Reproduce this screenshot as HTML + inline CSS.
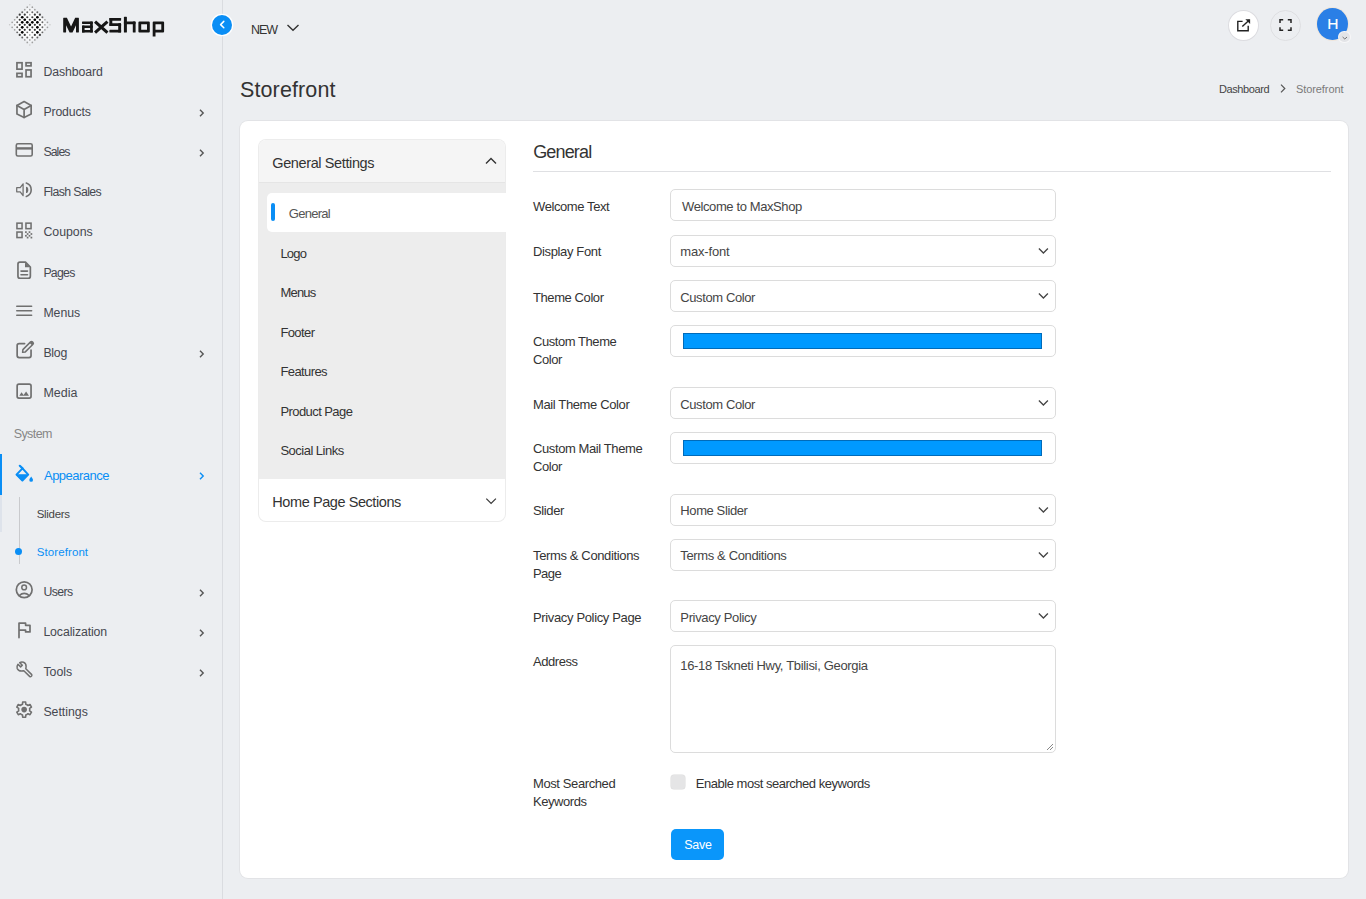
<!DOCTYPE html>
<html><head><meta charset="utf-8"><title>Storefront</title>
<style>
*{box-sizing:border-box;margin:0;padding:0}
html,body{width:1366px;height:899px;overflow:hidden;background:#eceef1;font-family:"Liberation Sans",sans-serif;color:#333}
body{position:relative}
.abs{position:absolute}
.t{position:absolute;white-space:nowrap}
svg{overflow:visible}
</style></head><body>
<div class="abs" style="left:222px;top:0;width:1px;height:899px;background:#dadce0"></div>
<svg class="abs" style="left:0;top:0" width="60" height="50" viewBox="0 0 60 50"><defs><radialGradient id="wg"><stop offset="0" stop-color="#fff"/><stop offset="0.55" stop-color="#fff"/><stop offset="1" stop-color="#fff" stop-opacity="0"/></radialGradient></defs><polygon points="29.8,5.8 48.8,24.8 29.8,43.8 10.8,24.8" fill="url(#wg)"/><circle cx="29.80" cy="4.64" r="0.75" fill="#c8c8c8"/><circle cx="27.28" cy="7.16" r="0.85" fill="#a0a0a0"/><circle cx="32.32" cy="7.16" r="0.85" fill="#a0a0a0"/><circle cx="24.76" cy="9.68" r="0.85" fill="#a0a0a0"/><circle cx="29.80" cy="9.68" r="0.85" fill="#a0a0a0"/><circle cx="34.84" cy="9.68" r="0.85" fill="#a0a0a0"/><circle cx="22.24" cy="12.20" r="0.98" fill="#666"/><circle cx="27.28" cy="12.20" r="0.98" fill="#666"/><circle cx="32.32" cy="12.20" r="0.98" fill="#666"/><circle cx="37.36" cy="12.20" r="0.98" fill="#666"/><circle cx="19.72" cy="14.72" r="1.10" fill="#3a3a3a"/><circle cx="24.76" cy="14.72" r="1.10" fill="#3a3a3a"/><circle cx="29.80" cy="14.72" r="0.85" fill="#a0a0a0"/><circle cx="34.84" cy="14.72" r="1.10" fill="#3a3a3a"/><circle cx="39.88" cy="14.72" r="1.10" fill="#3a3a3a"/><circle cx="17.20" cy="17.24" r="0.98" fill="#666"/><circle cx="22.24" cy="17.24" r="1.35" fill="#000"/><circle cx="27.28" cy="17.24" r="1.10" fill="#3a3a3a"/><circle cx="32.32" cy="17.24" r="1.10" fill="#3a3a3a"/><circle cx="37.36" cy="17.24" r="1.35" fill="#000"/><circle cx="42.40" cy="17.24" r="0.98" fill="#666"/><circle cx="14.68" cy="19.76" r="0.85" fill="#a0a0a0"/><circle cx="19.72" cy="19.76" r="1.10" fill="#3a3a3a"/><circle cx="24.76" cy="19.76" r="1.35" fill="#000"/><circle cx="29.80" cy="19.76" r="1.10" fill="#3a3a3a"/><circle cx="34.84" cy="19.76" r="1.35" fill="#000"/><circle cx="39.88" cy="19.76" r="1.10" fill="#3a3a3a"/><circle cx="44.92" cy="19.76" r="0.85" fill="#a0a0a0"/><circle cx="12.16" cy="22.28" r="0.85" fill="#a0a0a0"/><circle cx="17.20" cy="22.28" r="0.98" fill="#666"/><circle cx="22.24" cy="22.28" r="1.35" fill="#000"/><circle cx="27.28" cy="22.28" r="1.35" fill="#000"/><circle cx="32.32" cy="22.28" r="1.35" fill="#000"/><circle cx="37.36" cy="22.28" r="1.35" fill="#000"/><circle cx="42.40" cy="22.28" r="0.98" fill="#666"/><circle cx="47.44" cy="22.28" r="0.85" fill="#a0a0a0"/><circle cx="9.64" cy="24.80" r="0.75" fill="#c8c8c8"/><circle cx="14.68" cy="24.80" r="0.85" fill="#a0a0a0"/><circle cx="19.72" cy="24.80" r="1.10" fill="#3a3a3a"/><circle cx="24.76" cy="24.80" r="1.10" fill="#3a3a3a"/><circle cx="29.80" cy="24.80" r="1.35" fill="#000"/><circle cx="34.84" cy="24.80" r="1.10" fill="#3a3a3a"/><circle cx="39.88" cy="24.80" r="1.10" fill="#3a3a3a"/><circle cx="44.92" cy="24.80" r="0.85" fill="#a0a0a0"/><circle cx="49.96" cy="24.80" r="0.75" fill="#c8c8c8"/><circle cx="12.16" cy="27.32" r="0.85" fill="#a0a0a0"/><circle cx="17.20" cy="27.32" r="0.98" fill="#666"/><circle cx="22.24" cy="27.32" r="1.35" fill="#000"/><circle cx="27.28" cy="27.32" r="1.10" fill="#3a3a3a"/><circle cx="32.32" cy="27.32" r="1.10" fill="#3a3a3a"/><circle cx="37.36" cy="27.32" r="1.35" fill="#000"/><circle cx="42.40" cy="27.32" r="0.98" fill="#666"/><circle cx="47.44" cy="27.32" r="0.85" fill="#a0a0a0"/><circle cx="14.68" cy="29.84" r="0.85" fill="#a0a0a0"/><circle cx="19.72" cy="29.84" r="1.10" fill="#3a3a3a"/><circle cx="24.76" cy="29.84" r="1.10" fill="#3a3a3a"/><circle cx="29.80" cy="29.84" r="1.10" fill="#3a3a3a"/><circle cx="34.84" cy="29.84" r="1.10" fill="#3a3a3a"/><circle cx="39.88" cy="29.84" r="1.10" fill="#3a3a3a"/><circle cx="44.92" cy="29.84" r="0.85" fill="#a0a0a0"/><circle cx="17.20" cy="32.36" r="0.98" fill="#666"/><circle cx="22.24" cy="32.36" r="1.35" fill="#000"/><circle cx="27.28" cy="32.36" r="0.98" fill="#666"/><circle cx="32.32" cy="32.36" r="0.98" fill="#666"/><circle cx="37.36" cy="32.36" r="1.35" fill="#000"/><circle cx="42.40" cy="32.36" r="0.98" fill="#666"/><circle cx="19.72" cy="34.88" r="1.10" fill="#3a3a3a"/><circle cx="24.76" cy="34.88" r="1.10" fill="#3a3a3a"/><circle cx="29.80" cy="34.88" r="0.85" fill="#a0a0a0"/><circle cx="34.84" cy="34.88" r="1.10" fill="#3a3a3a"/><circle cx="39.88" cy="34.88" r="1.10" fill="#3a3a3a"/><circle cx="22.24" cy="37.40" r="0.98" fill="#666"/><circle cx="27.28" cy="37.40" r="0.98" fill="#666"/><circle cx="32.32" cy="37.40" r="0.98" fill="#666"/><circle cx="37.36" cy="37.40" r="0.98" fill="#666"/><circle cx="24.76" cy="39.92" r="0.85" fill="#a0a0a0"/><circle cx="29.80" cy="39.92" r="0.85" fill="#a0a0a0"/><circle cx="34.84" cy="39.92" r="0.85" fill="#a0a0a0"/><circle cx="27.28" cy="42.44" r="0.85" fill="#a0a0a0"/><circle cx="32.32" cy="42.44" r="0.85" fill="#a0a0a0"/><circle cx="29.80" cy="44.96" r="0.75" fill="#c8c8c8"/></svg>
<svg class="abs" style="left:0;top:0" width="170" height="45" viewBox="0 0 170 45" fill="#161616"><path d="M63.6 17.8 H66.9 L71.05 26.4 L75.2 17.8 H78.5 Q78.9 17.8 78.9 18.2 V32.1 Q78.9 32.5 78.5 32.5 H76.4 Q76 32.5 76 32.1 V25.3 L72.5 32.5 H69.6 L66.1 25.3 V32.1 Q66.1 32.5 65.7 32.5 H63.6 Q63.2 32.5 63.2 32.1 V18.2 Q63.2 17.8 63.6 17.8 Z"/><rect x="82.00" y="21.50" width="10.80" height="2.40" rx="0.60"/><rect x="90.10" y="21.50" width="2.70" height="11.00" rx="0.60"/><rect x="82.00" y="25.60" width="10.80" height="2.30" rx="0.60"/><rect x="82.00" y="25.60" width="2.60" height="6.90" rx="0.60"/><rect x="82.00" y="29.90" width="10.80" height="2.60" rx="0.60"/><path d="M96.2 22.6 L106.3 31.6 M106.3 22.6 L96.2 31.6" fill="none" stroke="#161616" stroke-width="3.1" stroke-linecap="square"/><rect x="109.40" y="17.90" width="11.70" height="2.80" rx="0.60"/><rect x="109.40" y="17.90" width="2.90" height="8.00" rx="0.60"/><rect x="109.40" y="23.30" width="11.70" height="2.80" rx="0.60"/><rect x="118.20" y="23.30" width="2.90" height="9.30" rx="0.60"/><rect x="109.40" y="29.80" width="11.70" height="2.80" rx="0.60"/><rect x="123.90" y="16.80" width="3.00" height="15.80" rx="0.60"/><rect x="123.90" y="21.40" width="11.60" height="2.80" rx="0.60"/><rect x="132.80" y="21.40" width="2.80" height="11.20" rx="0.60"/><path d="M138.4 22.4 Q138.4 21.4 139.4 21.4 H148.8 Q149.8 21.4 149.8 22.4 V31.6 Q149.8 32.6 148.8 32.6 H139.4 Q138.4 32.6 138.4 31.6 Z M141.2 24.2 V29.8 H147 V24.2 Z" fill-rule="evenodd"/><path d="M152.7 22.4 Q152.7 21.4 153.7 21.4 H163.1 Q164.1 21.4 164.1 22.4 V31.6 Q164.1 32.6 163.1 32.6 H155.5 V36.6 H152.7 Z M155.5 24.2 V29.8 H161.3 V24.2 Z" fill-rule="evenodd"/></svg>
<div class="abs" style="left:212.4px;top:14.6px;width:20px;height:20px;border-radius:50%;background:#0a8ef5;box-shadow:0 0 0 1.3px #fff"></div>
<svg class="abs" style="left:212px;top:14px" width="21" height="21" viewBox="0 0 21 21"><path d="M11.8 7.4 L8.6 10.6 L11.8 13.8" fill="none" stroke="#fff" stroke-width="1.5" stroke-linecap="round" stroke-linejoin="round"/></svg>
<div class="t" style="left:251.00px;top:21px;font-size:12.50px;line-height:18px;color:#333;letter-spacing:-1.078px;">NEW</div>
<svg class="abs" style="left:285px;top:22px" width="16" height="12" viewBox="0 0 16 12"><path d="M2.5 3 L8 8.3 L13.5 3" fill="none" stroke="#333" stroke-width="1.4"/></svg>
<div class="abs" style="left:1228.2px;top:9.8px;width:31.2px;height:31.4px;border-radius:50%;background:#fff;border:1px solid #dcdce0"></div>
<svg class="abs" style="left:1230px;top:12px" width="28" height="28" viewBox="1230 12 28 28"><g fill="none" stroke="#222" stroke-width="1.4"><path d="M1242.6 21.4 H1237.8 V30.7 H1248.2 V25.8"/><path d="M1242.3 26.6 L1249.4 19.9"/></g><path d="M1245.4 19.2 H1250.1 V23.9 Z" fill="#222"/></svg>
<div class="abs" style="left:1270px;top:10px;width:31px;height:31px;border-radius:50%;background:#eceef1;border:1px solid #dedfe2"></div>
<svg class="abs" style="left:1272px;top:12px" width="28" height="28" viewBox="1272 12 28 28"><path d="M1280 23 V19.8 H1283.2 M1287.8 19.8 H1291 V23 M1291 27.2 V30.3 H1287.8 M1283.2 30.3 H1280 V27.2" fill="none" stroke="#222" stroke-width="1.5"/></svg>
<div class="abs" style="left:1317.2px;top:8.2px;width:30.6px;height:31.8px;border-radius:50%;background:#2a7fe6;box-shadow:0 0 0 1px #efe6dc"></div>
<div class="t" style="left:1327.20px;top:13px;font-size:15.50px;line-height:22px;color:#fff;letter-spacing:0.000px;-webkit-text-stroke:0.15px #fff">H</div>
<div class="abs" style="left:1339.3px;top:31.6px;width:10.8px;height:10.8px;border-radius:50%;background:#e3e4e7;box-shadow:0 0 0 1px #f7f7f8"></div>
<svg class="abs" style="left:1339px;top:31.5px" width="12" height="12" viewBox="0 0 12 12"><path d="M3.6 5 L5.8 7 L8 5" fill="none" stroke="#666" stroke-width="0.9"/></svg>
<svg class="abs" style="left:12px;top:58px" width="24" height="24" viewBox="12 58 24 24"><rect x="16.95" y="62.75" width="5.10" height="6.40" fill="none" stroke="#707070" stroke-width="1.7"/><rect x="26.05" y="62.75" width="5.00" height="3.10" fill="none" stroke="#707070" stroke-width="1.7"/><rect x="16.95" y="73.35" width="5.10" height="3.40" fill="none" stroke="#707070" stroke-width="1.7"/><rect x="26.05" y="69.95" width="5.00" height="6.80" fill="none" stroke="#707070" stroke-width="1.7"/></svg>
<svg class="abs" style="left:12px;top:98px" width="24" height="24" viewBox="12 98 24 24"><path d="M24.1 101.6 L31.15 105.5 V114.1 L24.1 117.4 L16.95 114.1 V105.5 Z" fill="none" stroke="#707070" stroke-width="1.70" stroke-linejoin="round" stroke-linecap="round" /><path d="M16.95 105.5 L24.1 109.5 L31.15 105.5 M24.1 109.5 V117.4" fill="none" stroke="#707070" stroke-width="1.70" stroke-linejoin="round" stroke-linecap="round" /></svg>
<svg class="abs" style="left:12px;top:138px" width="24" height="24" viewBox="12 138 24 24"><rect x="16.3" y="143.7" width="15.9" height="12.3" rx="1.6" fill="none" stroke="#707070" stroke-width="1.6"/><rect x="16.3" y="147.2" width="15.9" height="2.4" fill="#707070"/></svg>
<svg class="abs" style="left:12px;top:178px" width="24" height="24" viewBox="12 178 24 24"><path d="M16.7 187.7 H20.2 L23.1 183.8 V195.7 L20.2 191.8 H16.7 Z" fill="none" stroke="#707070" stroke-width="1.25" stroke-linejoin="round" stroke-linecap="round" /><path d="M26 186.8 A2.3 3.1 0 0 1 26 193 Z" fill="#707070"/><path d="M26.3 183 A7.1 7.1 0 0 1 26.3 196.5" fill="none" stroke="#707070" stroke-width="1.60" stroke-linejoin="round" stroke-linecap="round" /></svg>
<svg class="abs" style="left:12px;top:218px" width="24" height="24" viewBox="12 218 24 24"><g fill="none" stroke="#707070" stroke-width="1.55"><rect x="16.95" y="223.15" width="5.1" height="5.5"/><rect x="25.95" y="223.15" width="5.1" height="5.5"/><rect x="16.95" y="232.05" width="5.1" height="5.5"/></g><rect x="25.05" y="231.25" width="1.7" height="1.7" fill="#707070"/><rect x="28.65" y="231.25" width="1.7" height="1.7" fill="#707070"/><rect x="26.75" y="233.15" width="1.7" height="1.7" fill="#707070"/><rect x="30.55" y="233.15" width="1.7" height="1.7" fill="#707070"/><rect x="25.05" y="234.95" width="1.7" height="1.7" fill="#707070"/><rect x="28.65" y="234.95" width="1.7" height="1.7" fill="#707070"/><rect x="26.75" y="236.75" width="1.7" height="1.7" fill="#707070"/><rect x="30.55" y="236.75" width="1.7" height="1.7" fill="#707070"/></svg>
<svg class="abs" style="left:12px;top:258px" width="24" height="24" viewBox="12 258 24 24"><path d="M25.5 262.15 H19.95 Q17.95 262.15 17.95 264.15 V276.25 Q17.95 278.25 19.95 278.25 H28.35 Q30.35 278.25 30.35 276.25 V267 Z" fill="none" stroke="#707070" stroke-width="1.70" stroke-linejoin="round" stroke-linecap="round" /><path d="M25 262.6 V267.2 H29.9 Z" fill="#707070"/><path d="M21 271.1 H27.5 M21 274.7 H27.5" fill="none" stroke="#707070" stroke-width="1.60" stroke-linejoin="round" stroke-linecap="round" /></svg>
<svg class="abs" style="left:12px;top:298px" width="24" height="24" viewBox="12 298 24 24"><path d="M16.8 306.3 H31.6 M16.8 310.7 H31.6 M16.8 315.2 H31.6" fill="none" stroke="#707070" stroke-width="1.60" stroke-linejoin="round" stroke-linecap="round" stroke-linecap="butt"/></svg>
<svg class="abs" style="left:12px;top:337px" width="24" height="24" viewBox="12 337 24 24"><path d="M24.6 343.55 H19.15 Q17.15 343.55 17.15 345.55 V355.55 Q17.15 357.55 19.15 357.55 H29.05 Q31.05 357.55 31.05 355.55 V350" fill="none" stroke="#707070" stroke-width="1.70" stroke-linejoin="round" stroke-linecap="round" /><path d="M22.6 352.3 L22.9 349.6 L30.6 341.9 Q31.5 341.1 32.4 341.9 L33 342.5 Q33.8 343.4 33 344.2 L25.3 351.9 Z" fill="none" stroke="#707070" stroke-width="1.50" stroke-linejoin="round" stroke-linecap="round" /><path d="M29.6 342.9 L30.6 341.9 Q31.5 341.1 32.4 341.9 L33 342.5 Q33.8 343.4 33 344.2 L32 345.2 Z" fill="#707070"/></svg>
<svg class="abs" style="left:12px;top:379px" width="24" height="24" viewBox="12 379 24 24"><rect x="17.15" y="384.15" width="13.9" height="13.9" rx="1.8" fill="none" stroke="#707070" stroke-width="1.7"/><path d="M19.3 395.8 L21.5 392.2 L23.6 395 L26.1 391.6 L29 395.8 Z" fill="#707070"/></svg>
<svg class="abs" style="left:12px;top:578px" width="24" height="24" viewBox="12 578 24 24"><circle cx="24.2" cy="589.7" r="7.9" fill="none" stroke="#707070" stroke-width="1.7"/><circle cx="24.15" cy="587.4" r="2.35" fill="none" stroke="#707070" stroke-width="1.5"/><path d="M19.2 595.6 Q24.2 591.2 29.3 595.6" fill="none" stroke="#707070" stroke-width="1.60" stroke-linejoin="round" stroke-linecap="round" /></svg>
<svg class="abs" style="left:12px;top:618px" width="24" height="24" viewBox="12 618 24 24"><path d="M19 637.6 V623.2 H25.6 V625.3 H30 V631.9 H25.6 V630.2 H19" fill="none" stroke="#707070" stroke-width="1.70" stroke-linejoin="round" stroke-linecap="round" stroke-linejoin="miter"/></svg>
<svg class="abs" style="left:12px;top:658px" width="24" height="24" viewBox="12 658 24 24"><path d="M19.7 662.6 L22.3 665.2 L20.6 666.9 L18 664.3 Q16.6 666.2 17.2 668.5 Q18.3 671.2 21.6 671.1 L23.8 670.8 L29.6 676.4 Q30.5 677.1 31.3 676.3 L31.6 676 Q32.3 675.2 31.5 674.4 L25.8 668.8 L26.1 666.6 Q26.2 663.3 23.5 662.2 Q21.4 661.6 19.7 662.6 Z" fill="none" stroke="#707070" stroke-width="1.50" stroke-linejoin="round" stroke-linecap="round" /></svg>
<svg class="abs" style="left:12px;top:698px" width="24" height="24" viewBox="12 698 24 24"><path d="M29.75 709.60 L29.61 708.34 L31.48 707.08 L30.00 704.52 L27.97 705.50 L26.95 704.75 L25.79 704.24 L25.63 701.99 L22.67 701.99 L22.51 704.24 L21.35 704.75 L20.33 705.50 L18.30 704.52 L16.82 707.08 L18.69 708.34 L18.55 709.60 L18.69 710.86 L16.82 712.12 L18.30 714.68 L20.33 713.70 L21.35 714.45 L22.51 714.96 L22.67 717.21 L25.63 717.21 L25.79 714.96 L26.95 714.45 L27.97 713.70 L30.00 714.68 L31.48 712.12 L29.61 710.86 Z" fill="none" stroke="#707070" stroke-width="1.60" stroke-linejoin="round" stroke-linecap="round" /><circle cx="24.15" cy="709.60" r="2.8" fill="#707070"/></svg>
<div class="t" style="left:43.40px;top:64px;font-size:12.30px;line-height:17px;color:#464850;letter-spacing:-0.085px;">Dashboard</div>
<div class="t" style="left:43.40px;top:104px;font-size:12.30px;line-height:17px;color:#464850;letter-spacing:-0.151px;">Products</div>
<svg class="abs" style="left:198px;top:107.7px" width="8" height="10" viewBox="0 0 8 10"><path d="M2 1.8 L5.2 5 L2 8.2" fill="none" stroke="#555" stroke-width="1.4"/></svg>
<div class="t" style="left:43.40px;top:144px;font-size:12.30px;line-height:17px;color:#464850;letter-spacing:-0.920px;">Sales</div>
<svg class="abs" style="left:198px;top:147.7px" width="8" height="10" viewBox="0 0 8 10"><path d="M2 1.8 L5.2 5 L2 8.2" fill="none" stroke="#555" stroke-width="1.4"/></svg>
<div class="t" style="left:43.40px;top:184px;font-size:12.30px;line-height:17px;color:#464850;letter-spacing:-0.597px;">Flash Sales</div>
<div class="t" style="left:43.40px;top:224px;font-size:12.34px;line-height:17px;color:#464850;letter-spacing:0.000px;">Coupons</div>
<div class="t" style="left:43.40px;top:265px;font-size:12.30px;line-height:17px;color:#464850;letter-spacing:-0.743px;">Pages</div>
<div class="t" style="left:43.40px;top:305px;font-size:12.30px;line-height:17px;color:#464850;letter-spacing:-0.033px;">Menus</div>
<div class="t" style="left:43.40px;top:345px;font-size:12.30px;line-height:17px;color:#464850;letter-spacing:-0.244px;">Blog</div>
<svg class="abs" style="left:198px;top:348.7px" width="8" height="10" viewBox="0 0 8 10"><path d="M2 1.8 L5.2 5 L2 8.2" fill="none" stroke="#555" stroke-width="1.4"/></svg>
<div class="t" style="left:43.40px;top:385px;font-size:12.48px;line-height:17px;color:#464850;letter-spacing:0.000px;">Media</div>
<div class="t" style="left:43.40px;top:584px;font-size:12.30px;line-height:17px;color:#464850;letter-spacing:-0.608px;">Users</div>
<svg class="abs" style="left:198px;top:587.7px" width="8" height="10" viewBox="0 0 8 10"><path d="M2 1.8 L5.2 5 L2 8.2" fill="none" stroke="#555" stroke-width="1.4"/></svg>
<div class="t" style="left:43.40px;top:624px;font-size:12.30px;line-height:17px;color:#464850;letter-spacing:-0.107px;">Localization</div>
<svg class="abs" style="left:198px;top:627.7px" width="8" height="10" viewBox="0 0 8 10"><path d="M2 1.8 L5.2 5 L2 8.2" fill="none" stroke="#555" stroke-width="1.4"/></svg>
<div class="t" style="left:43.40px;top:664px;font-size:12.33px;line-height:17px;color:#464850;letter-spacing:0.000px;">Tools</div>
<svg class="abs" style="left:198px;top:667.7px" width="8" height="10" viewBox="0 0 8 10"><path d="M2 1.8 L5.2 5 L2 8.2" fill="none" stroke="#555" stroke-width="1.4"/></svg>
<div class="t" style="left:43.40px;top:704px;font-size:12.30px;line-height:17px;color:#464850;letter-spacing:-0.005px;">Settings</div>
<div class="t" style="left:13.70px;top:425px;font-size:12.50px;line-height:18px;color:#868686;letter-spacing:-0.583px;">System</div>
<div class="abs" style="left:0;top:454px;width:2px;height:41px;background:#0a8ef5"></div>
<svg class="abs" style="left:12px;top:461px" width="24" height="24" viewBox="12 461 24 24"><path d="M22.5 468.4 L28.2 474.6 L22.4 480.5 L16.5 474.6 Z" fill="none" stroke="#0a8ef5" stroke-width="2" stroke-linejoin="round"/><path d="M16.5 474.8 H28.2 L22.4 480.5 Z" fill="#0a8ef5" stroke="#0a8ef5" stroke-width="1" stroke-linejoin="round"/><path d="M22.5 468.4 L19.8 465.8" stroke="#0a8ef5" stroke-width="2.2" stroke-linecap="round"/><path d="M31.2 476.6 Q33 479.2 33 480 A1.85 1.85 0 0 1 29.3 480 Q29.3 479.2 31.2 476.6 Z" fill="#0a8ef5"/></svg>
<div class="t" style="left:44.00px;top:467px;font-size:13.00px;line-height:18px;color:#0a8ef5;letter-spacing:-0.523px;">Appearance</div>
<svg class="abs" style="left:198px;top:471.3px" width="8" height="10" viewBox="0 0 8 10"><path d="M2 1.8 L5.2 5 L2 8.2" fill="none" stroke="#0a8ef5" stroke-width="1.4"/></svg>
<div class="abs" style="left:18.6px;top:497px;width:1px;height:67px;background:#c9cacd"></div>
<div class="abs" style="left:0;top:495px;width:2px;height:37px;background:rgba(120,150,200,0.12)"></div>
<div class="abs" style="left:15.1px;top:547.5px;width:7.4px;height:7.4px;border-radius:50%;background:#0a8ef5"></div>
<div class="t" style="left:36.70px;top:506px;font-size:11.50px;line-height:16px;color:#454545;letter-spacing:-0.294px;">Sliders</div>
<div class="t" style="left:36.70px;top:544px;font-size:11.50px;line-height:16px;color:#0a8ef5;letter-spacing:0.098px;">Storefront</div>
<div class="t" style="left:240.00px;top:75px;font-size:21.50px;line-height:30px;color:#333;letter-spacing:0.118px;">Storefront</div>
<div class="t" style="left:1218.90px;top:82px;font-size:11.00px;line-height:15px;color:#454545;letter-spacing:-0.390px;">Dashboard</div>
<svg class="abs" style="left:1278px;top:83px" width="10" height="11" viewBox="0 0 10 11"><path d="M3 1.7 L6.8 5.5 L3 9.3" fill="none" stroke="#555" stroke-width="1.2"/></svg>
<div class="t" style="left:1295.90px;top:82px;font-size:11.00px;line-height:15px;color:#7a7a7a;letter-spacing:-0.069px;">Storefront</div>
<div class="abs" style="left:240px;top:120.5px;width:1108px;height:757.3px;background:#fff;border-radius:8px;box-shadow:0 0 0 1px #e2e3e6"></div>
<div class="abs" style="left:258.5px;top:139.8px;width:246.2px;height:381.7px;border-radius:7px;background:#fff;box-shadow:0 0 0 1px #ececec;overflow:hidden"><div class="abs" style="left:0;top:0;width:247px;height:43px;background:#f5f5f5;border-bottom:1px solid #e5e5e5"></div><div class="abs" style="left:0;top:43px;width:247px;height:296px;background:#ededed"></div></div>
<div class="t" style="left:272.30px;top:153px;font-size:14.50px;line-height:20px;color:#333;letter-spacing:-0.388px;">General Settings</div>
<svg class="abs" style="left:483px;top:155px" width="16" height="12" viewBox="0 0 16 12"><path d="M3 8.5 L8 3.5 L13 8.5" fill="none" stroke="#333" stroke-width="1.4"/></svg>
<div class="abs" style="left:266.6px;top:192.6px;width:239.5px;height:39.2px;background:#fff;border-radius:5px 0 0 5px"></div>
<div class="abs" style="left:271px;top:203.2px;width:4px;height:17.5px;background:#0a8ef5;border-radius:2px"></div>
<div class="t" style="left:288.80px;top:205px;font-size:13.00px;line-height:18px;color:#555;letter-spacing:-0.741px;">General</div>
<div class="t" style="left:280.40px;top:245px;font-size:13.00px;line-height:18px;color:#333;letter-spacing:-0.771px;">Logo</div>
<div class="t" style="left:280.40px;top:284px;font-size:13.00px;line-height:18px;color:#333;letter-spacing:-0.780px;">Menus</div>
<div class="t" style="left:280.40px;top:324px;font-size:13.00px;line-height:18px;color:#333;letter-spacing:-0.601px;">Footer</div>
<div class="t" style="left:280.40px;top:363px;font-size:13.00px;line-height:18px;color:#333;letter-spacing:-0.586px;">Features</div>
<div class="t" style="left:280.40px;top:403px;font-size:13.00px;line-height:18px;color:#333;letter-spacing:-0.573px;">Product Page</div>
<div class="t" style="left:280.40px;top:442px;font-size:13.00px;line-height:18px;color:#333;letter-spacing:-0.505px;">Social Links</div>
<div class="t" style="left:272.30px;top:492px;font-size:14.50px;line-height:20px;color:#333;letter-spacing:-0.425px;">Home Page Sections</div>
<svg class="abs" style="left:483px;top:494.6px" width="16" height="12" viewBox="0 0 16 12"><path d="M3.3 3.6 L8.1 8.4 L12.9 3.6" fill="none" stroke="#3a3a3a" stroke-width="1.25"/></svg>
<div class="t" style="left:533.20px;top:140px;font-size:18.00px;line-height:25px;color:#333;letter-spacing:-0.839px;">General</div>
<div class="abs" style="left:533px;top:170.6px;width:798px;height:1.4px;background:#dfe0e3"></div>
<div class="t" style="left:533.00px;top:198px;font-size:13.00px;line-height:18px;color:#333;letter-spacing:-0.406px;">Welcome Text</div>
<div class="abs" style="left:670px;top:189.3px;width:386px;height:32.0px;border:1px solid #dcdcdc;border-radius:5px;background:#fff"></div>
<div class="t" style="left:682.00px;top:198px;font-size:13.00px;line-height:18px;color:#454545;letter-spacing:-0.391px;">Welcome to MaxShop</div>
<div class="t" style="left:533.00px;top:243px;font-size:13.00px;line-height:18px;color:#333;letter-spacing:-0.361px;">Display Font</div>
<div class="abs" style="left:670px;top:234.6px;width:386px;height:32.0px;border:1px solid #dcdcdc;border-radius:5px;background:#fff"></div>
<div class="t" style="left:680.30px;top:243px;font-size:13.00px;line-height:18px;color:#454545;letter-spacing:-0.167px;">max-font</div>
<svg class="abs" style="left:1036px;top:245.6px" width="14" height="10" viewBox="0 0 14 10"><path d="M2.9 2.5 L7.4 7 L11.9 2.5" fill="none" stroke="#444" stroke-width="1.3"/></svg>
<div class="t" style="left:533.00px;top:289px;font-size:13.00px;line-height:18px;color:#333;letter-spacing:-0.413px;">Theme Color</div>
<div class="abs" style="left:670px;top:280.4px;width:386px;height:32.0px;border:1px solid #dcdcdc;border-radius:5px;background:#fff"></div>
<div class="t" style="left:680.30px;top:289px;font-size:13.00px;line-height:18px;color:#454545;letter-spacing:-0.397px;">Custom Color</div>
<svg class="abs" style="left:1036px;top:291.4px" width="14" height="10" viewBox="0 0 14 10"><path d="M2.9 2.5 L7.4 7 L11.9 2.5" fill="none" stroke="#444" stroke-width="1.3"/></svg>
<div class="t" style="left:533.00px;top:333px;font-size:13.00px;line-height:18px;color:#333;letter-spacing:-0.443px;">Custom Theme</div>
<div class="t" style="left:533.00px;top:351px;font-size:13.00px;line-height:18px;color:#333;letter-spacing:-0.427px;">Color</div>
<div class="abs" style="left:670px;top:325.0px;width:386px;height:32.0px;border:1px solid #dcdcdc;border-radius:5px;background:#fff"></div>
<div class="abs" style="left:683px;top:332.8px;width:359px;height:16px;background:#0099ff;box-shadow:inset 0 0 0 1px rgba(0,70,130,0.55)"></div>
<div class="t" style="left:533.00px;top:396px;font-size:13.00px;line-height:18px;color:#333;letter-spacing:-0.375px;">Mail Theme Color</div>
<div class="abs" style="left:670px;top:387.2px;width:386px;height:32.0px;border:1px solid #dcdcdc;border-radius:5px;background:#fff"></div>
<div class="t" style="left:680.30px;top:396px;font-size:13.00px;line-height:18px;color:#454545;letter-spacing:-0.397px;">Custom Color</div>
<svg class="abs" style="left:1036px;top:398.2px" width="14" height="10" viewBox="0 0 14 10"><path d="M2.9 2.5 L7.4 7 L11.9 2.5" fill="none" stroke="#444" stroke-width="1.3"/></svg>
<div class="t" style="left:533.00px;top:440px;font-size:13.00px;line-height:18px;color:#333;letter-spacing:-0.399px;">Custom Mail Theme</div>
<div class="t" style="left:533.00px;top:458px;font-size:13.00px;line-height:18px;color:#333;letter-spacing:-0.427px;">Color</div>
<div class="abs" style="left:670px;top:431.9px;width:386px;height:32.0px;border:1px solid #dcdcdc;border-radius:5px;background:#fff"></div>
<div class="abs" style="left:683px;top:439.7px;width:359px;height:16px;background:#0099ff;box-shadow:inset 0 0 0 1px rgba(0,70,130,0.55)"></div>
<div class="t" style="left:533.00px;top:502px;font-size:13.00px;line-height:18px;color:#333;letter-spacing:-0.366px;">Slider</div>
<div class="abs" style="left:670px;top:494.0px;width:386px;height:32.0px;border:1px solid #dcdcdc;border-radius:5px;background:#fff"></div>
<div class="t" style="left:680.30px;top:502px;font-size:13.00px;line-height:18px;color:#454545;letter-spacing:-0.393px;">Home Slider</div>
<svg class="abs" style="left:1036px;top:505.0px" width="14" height="10" viewBox="0 0 14 10"><path d="M2.9 2.5 L7.4 7 L11.9 2.5" fill="none" stroke="#444" stroke-width="1.3"/></svg>
<div class="t" style="left:533.00px;top:547px;font-size:13.00px;line-height:18px;color:#333;letter-spacing:-0.365px;">Terms &amp; Conditions</div>
<div class="t" style="left:533.00px;top:565px;font-size:13.00px;line-height:18px;color:#333;letter-spacing:-0.557px;">Page</div>
<div class="abs" style="left:670px;top:538.8px;width:386px;height:32.0px;border:1px solid #dcdcdc;border-radius:5px;background:#fff"></div>
<div class="t" style="left:680.30px;top:547px;font-size:13.00px;line-height:18px;color:#454545;letter-spacing:-0.365px;">Terms &amp; Conditions</div>
<svg class="abs" style="left:1036px;top:549.8px" width="14" height="10" viewBox="0 0 14 10"><path d="M2.9 2.5 L7.4 7 L11.9 2.5" fill="none" stroke="#444" stroke-width="1.3"/></svg>
<div class="t" style="left:533.00px;top:609px;font-size:13.00px;line-height:18px;color:#333;letter-spacing:-0.351px;">Privacy Policy Page</div>
<div class="abs" style="left:670px;top:600.3px;width:386px;height:32.0px;border:1px solid #dcdcdc;border-radius:5px;background:#fff"></div>
<div class="t" style="left:680.30px;top:609px;font-size:13.00px;line-height:18px;color:#454545;letter-spacing:-0.342px;">Privacy Policy</div>
<svg class="abs" style="left:1036px;top:611.3px" width="14" height="10" viewBox="0 0 14 10"><path d="M2.9 2.5 L7.4 7 L11.9 2.5" fill="none" stroke="#444" stroke-width="1.3"/></svg>
<div class="t" style="left:533.00px;top:653px;font-size:13.00px;line-height:18px;color:#333;letter-spacing:-0.437px;">Address</div>
<div class="abs" style="left:670px;top:645.2px;width:386px;height:107.8px;border:1px solid #dcdcdc;border-radius:5px;background:#fff"></div>
<svg class="abs" style="left:1044px;top:741px" width="10" height="10" viewBox="0 0 10 10"><path d="M9 3 L3 9 M9 6 L6 9" stroke="#888" stroke-width="1"/></svg>
<div class="t" style="left:680.30px;top:657px;font-size:13.00px;line-height:18px;color:#454545;letter-spacing:-0.321px;">16-18 Tskneti Hwy, Tbilisi, Georgia</div>
<div class="t" style="left:533.00px;top:775px;font-size:13.00px;line-height:18px;color:#333;letter-spacing:-0.401px;">Most Searched</div>
<div class="t" style="left:533.00px;top:793px;font-size:13.00px;line-height:18px;color:#333;letter-spacing:-0.448px;">Keywords</div>
<div class="abs" style="left:670.6px;top:775.3px;width:14px;height:14px;border-radius:3px;background:#e5e5e6;box-shadow:0 0 0 0.5px #dcdcdc"></div>
<div class="t" style="left:695.80px;top:775px;font-size:13.00px;line-height:18px;color:#333;letter-spacing:-0.478px;">Enable most searched keywords</div>
<div class="abs" style="left:670.5px;top:828.5px;width:53.5px;height:31.5px;border-radius:5px;background:#0a96fa"></div>
<div class="t" style="left:684.30px;top:836px;font-size:12.50px;line-height:18px;color:#fff;letter-spacing:-0.285px;">Save</div>
</body></html>
